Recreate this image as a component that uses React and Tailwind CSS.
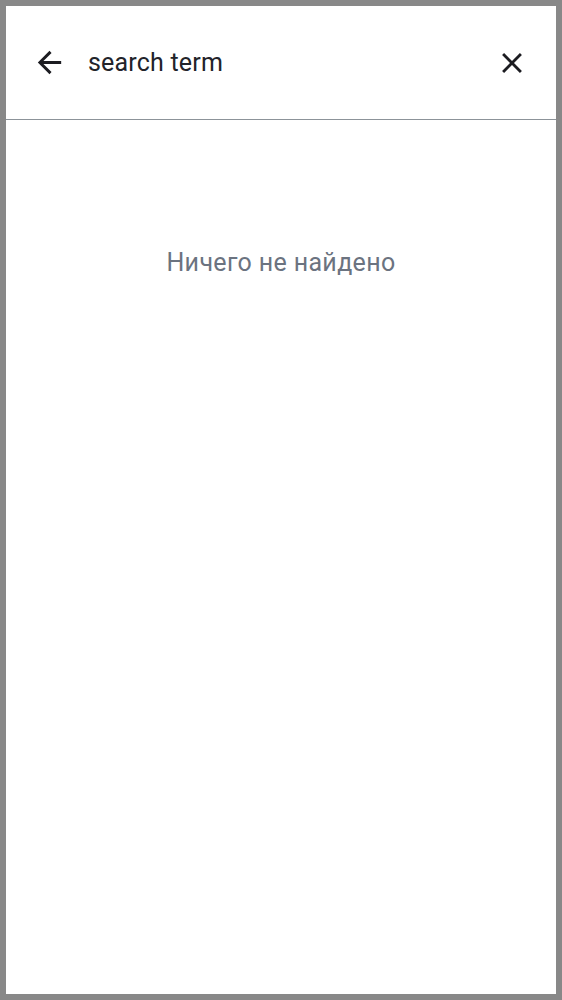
import React from 'react';
import { MdArrowBack, MdClose } from 'react-icons/md';

const App = () => {
  return (
    <div className="h-[1000px] w-full bg-[#888888] p-[6px]" style={{ fontFamily: 'Roboto, "Noto Sans", sans-serif' }}>
      <div className="flex h-full flex-col bg-white">
        {/* Search bar */}
        <div className="flex h-[114px] items-center border-b border-[#8c9399] pl-[25px] pr-[26px]">
          <button className="flex h-[36px] w-[36px] items-center justify-center text-[#1c1c21]">
            <MdArrowBack size={35} />
          </button>
          <div className="ml-[21px] flex-1 text-[25px] leading-none tracking-[0.2px] text-[#22232a]">search term</div>
          <button className="flex h-[36px] w-[36px] items-center justify-center text-[#1c1c21]">
            <MdClose size={34} />
          </button>
        </div>

        {/* Empty state */}
        <div className="pt-[128px] text-center text-[25px] leading-[30px] tracking-[0.35px] text-[#6b7380]">
          Ничего не найдено
        </div>
      </div>
    </div>
  );
};

export default App;
